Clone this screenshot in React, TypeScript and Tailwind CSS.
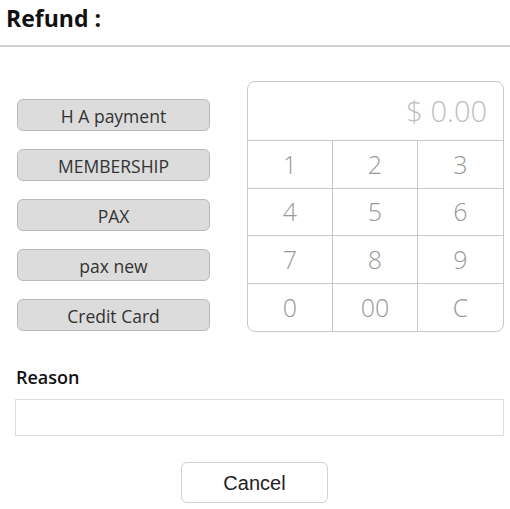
import React, { useState } from 'react';

const methods = ['H A payment', 'MEMBERSHIP', 'PAX', 'pax new', 'Credit Card'];
const keys = ['1', '2', '3', '4', '5', '6', '7', '8', '9', '0', '00', 'C'];

const Keypad: React.FC = () => {
  const [amount] = useState('0.00');

  return (
    <div className="w-[257px] h-[251px] border border-[#c8c8c8] rounded-[8px] flex flex-col overflow-hidden">
      <div className="h-[59px] flex items-center justify-end pr-[16px] border-b border-[#c8c8c8] text-[29px] font-light text-[#bdbdbd]">
        $ {amount}
      </div>
      <div className="flex-1 grid grid-cols-3 grid-rows-4">
        {keys.map((k, i) => (
          <button
            key={k}
            className={`flex items-center justify-center text-[25px] font-light text-[#999] border-[#c8c8c8] ${i % 3 !== 2 ? 'border-r' : ''} ${i < 9 ? 'border-b' : ''}`}
          >
            {k}
          </button>
        ))}
      </div>
    </div>
  );
};

export default function App() {
  return (
    <div className="w-[510px] h-[509px] bg-white font-['Open_Sans',sans-serif] text-[#222]">
      <div className="h-[45px] pl-[6px] pt-[2px] text-[23px] font-bold text-[#111] leading-[32px]">Refund :</div>
      <div className="h-[2px] bg-[#d0d0d0]" />

      <div className="flex pt-[34px] pl-[17px]">
        <div className="flex flex-col gap-[18px] pt-[18px] w-[193px]">
          {methods.map((m) => (
            <button
              key={m}
              className="h-[32px] w-[193px] pt-[2px] bg-[#dcdcdc] border border-[#b9b9b9] rounded-[6px] text-[17.5px] text-[#333] flex items-center justify-center"
            >
              {m}
            </button>
          ))}
        </div>
        <div className="ml-[37px]">
          <Keypad />
        </div>
      </div>

      <div className="pl-[16px] pt-[34px] text-[18px] font-semibold text-[#111] leading-[22px]">Reason</div>
      <div className="pl-[15px] pt-[11px]">
        <input className="w-[489px] h-[37px] border border-[#dcdcdc] outline-none px-2" />
      </div>

      <div className="flex justify-center pt-[26px]">
        <button className="ml-[-1px] w-[147px] h-[41px] border border-[#d0d0d0] rounded-[6px] text-[20px] text-[#222] font-['Liberation_Sans',sans-serif]">
          Cancel
        </button>
      </div>
    </div>
  );
}
